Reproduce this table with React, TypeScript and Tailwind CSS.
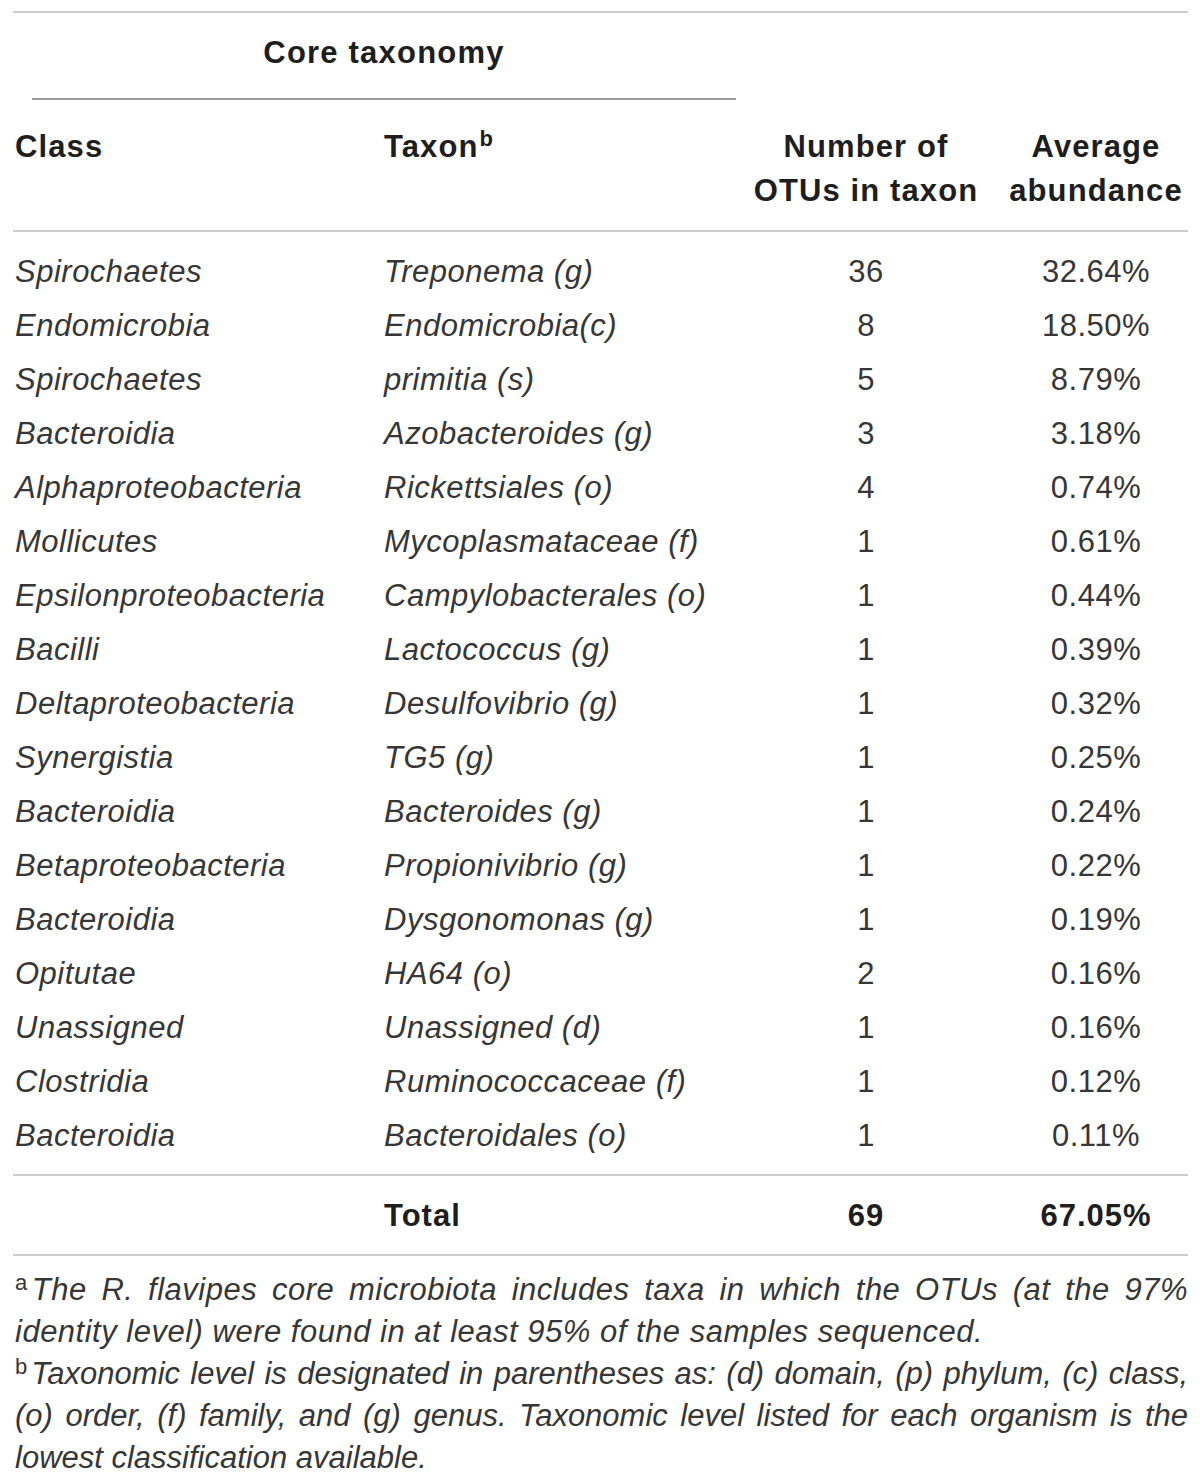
const rows = [
  ['Spirochaetes', 'Treponema (g)', '36', '32.64%'],
  ['Endomicrobia', 'Endomicrobia(c)', '8', '18.50%'],
  ['Spirochaetes', 'primitia (s)', '5', '8.79%'],
  ['Bacteroidia', 'Azobacteroides (g)', '3', '3.18%'],
  ['Alphaproteobacteria', 'Rickettsiales (o)', '4', '0.74%'],
  ['Mollicutes', 'Mycoplasmataceae (f)', '1', '0.61%'],
  ['Epsilonproteobacteria', 'Campylobacterales (o)', '1', '0.44%'],
  ['Bacilli', 'Lactococcus (g)', '1', '0.39%'],
  ['Deltaproteobacteria', 'Desulfovibrio (g)', '1', '0.32%'],
  ['Synergistia', 'TG5 (g)', '1', '0.25%'],
  ['Bacteroidia', 'Bacteroides (g)', '1', '0.24%'],
  ['Betaproteobacteria', 'Propionivibrio (g)', '1', '0.22%'],
  ['Bacteroidia', 'Dysgonomonas (g)', '1', '0.19%'],
  ['Opitutae', 'HA64 (o)', '2', '0.16%'],
  ['Unassigned', 'Unassigned (d)', '1', '0.16%'],
  ['Clostridia', 'Ruminococcaceae (f)', '1', '0.12%'],
  ['Bacteroidia', 'Bacteroidales (o)', '1', '0.11%'],
];

const cols = 'grid grid-cols-[371px_366px_232px_206px]';

export default function App() {
  return (
    <div className="min-h-screen bg-white font-['Liberation_Sans',Arial,sans-serif] text-[31px] tracking-[0.5px] text-[#363636]">
      <div className="ml-[13px] w-[1175px] pt-[11px]">
        <div className="border-t-2 border-[#cccccc]">
          {/* spanning header */}
          <div className="ml-[19px] w-[704px] border-b-2 border-[#9a9a9a] pt-[18px] pb-[23px] text-center font-bold leading-[44px] tracking-[1.2px] text-[#1e1e1e]">
            Core taxonomy
          </div>

          <div className={`${cols} border-b-2 border-[#cccccc] pt-[25px] pb-[17px] font-bold leading-[44px] tracking-[1.1px] text-[#1e1e1e]`}>
            <div className="pl-[2px]">Class</div>
            <div>
              Taxon<sup className="ml-[1px] text-[22px] leading-none tracking-normal">b</sup>
            </div>
            <div className="text-center">
              Number of
              <br />
              OTUs in taxon
            </div>
            <div className="pl-[22px] text-center">
              Average
              <br />
              abundance
            </div>
          </div>

          <div className="border-b-2 border-[#cccccc] pt-[13px] pb-[11px]">
            {rows.map((r, i) => (
              <div key={i} className={`${cols} h-[54px] items-center`}>
                <div className="pl-[2px] italic">{r[0]}</div>
                <div className="italic">{r[1]}</div>
                <div className="text-center">{r[2]}</div>
                <div className="pl-[22px] text-center">{r[3]}</div>
              </div>
            ))}
          </div>

          <div className={`${cols} h-[80px] items-center border-b-2 border-[#cccccc] pt-[3px] font-bold tracking-[1px] text-[#1e1e1e]`}>
            <div />
            <div>Total</div>
            <div className="text-center">69</div>
            <div className="pl-[22px] text-center">67.05%</div>
          </div>

          <div className="pt-[13px] pl-[2px] leading-[42px] italic">
            <p className="text-justify [text-align-last:left]">
              <span className="mr-[4px] inline-block align-top text-[22px] leading-[28px] not-italic">a</span>
              The R. flavipes core microbiota includes taxa in which the OTUs (at the 97% identity level) were found in at least 95% of the samples sequenced.
            </p>
            <p className="text-justify tracking-normal [text-align-last:left]">
              <span className="mr-[4px] inline-block align-top text-[22px] leading-[28px] not-italic">b</span>
              Taxonomic level is designated in parentheses as: (d) domain, (p) phylum, (c) class, (o) order, (f) family, and (g) genus. Taxonomic level listed for each organism is the lowest classification available.
            </p>
          </div>
        </div>
      </div>
    </div>
  );
}
